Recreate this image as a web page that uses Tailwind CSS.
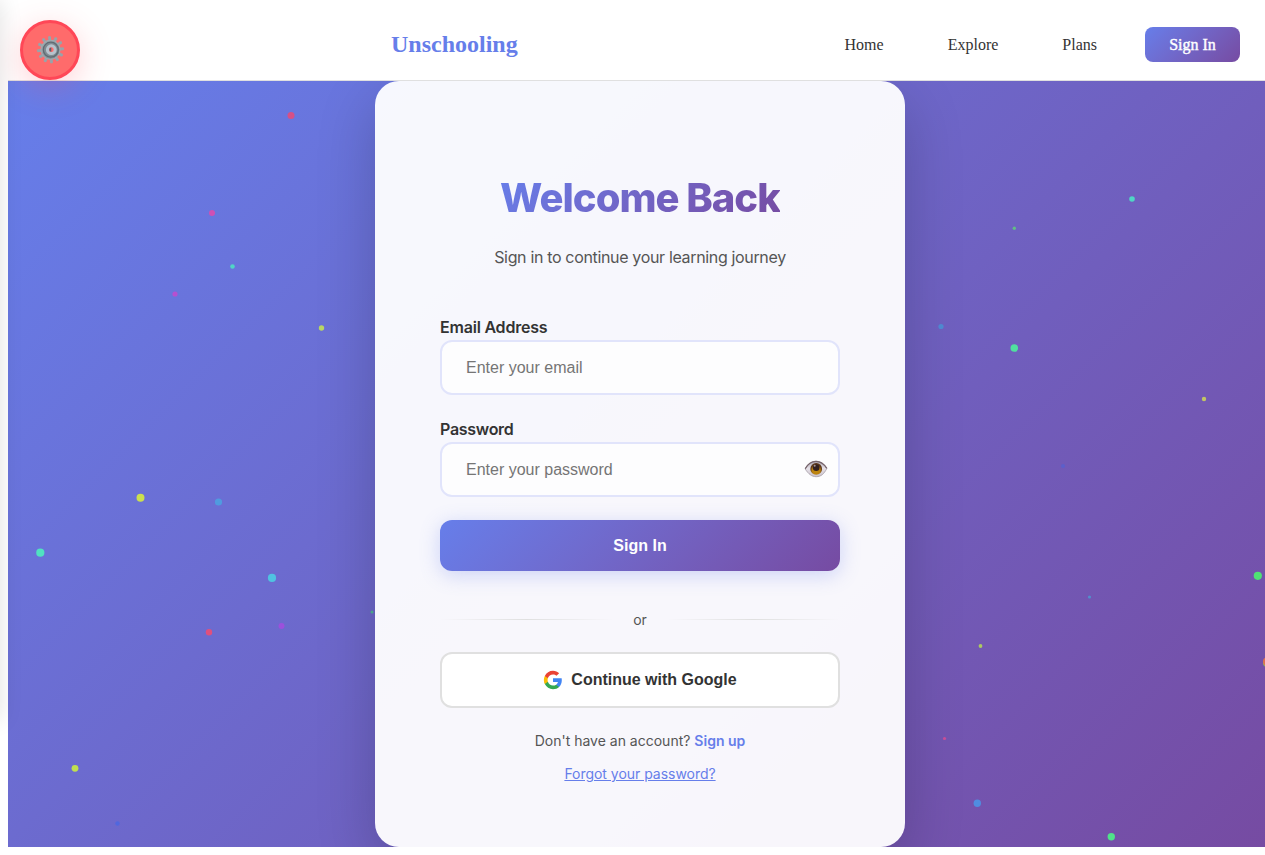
<!DOCTYPE html>
<html lang="en">
<head>
<meta charset="utf-8">
<title>Unschooling</title>
<script src="https://cdn.jsdelivr.net/npm/@tailwindcss/browser@4"></script>
</head>
<body class="h-[855px] overflow-hidden bg-white font-['Liberation_Serif',serif]">
<div class="relative h-[855px] w-[1280px] px-2">
  <header class="flex h-[81px] items-center border-b border-[#e0e0e0] pt-2 pr-8">
    <div class="ml-[383px] text-2xl font-bold text-[#667eea]">Unschooling</div>
    <nav class="ml-auto flex items-center text-base text-[#333]">
      <a class="mr-16 pt-0.5">Home</a>
      <a class="mr-16 pt-0.5">Explore</a>
      <a class="mr-12 pt-0.5">Plans</a>
      <a class="flex h-[35px] w-[95px] items-center justify-center rounded-lg bg-linear-135 from-[#667eea] to-[#764ba2] pt-px font-medium text-white [-webkit-text-stroke:0.4px_white]">Sign In</a>
    </nav>
  </header>

  <main class="relative flex h-[766px] justify-center overflow-hidden bg-[linear-gradient(135deg,#667eea_0%,#764ba2_100%)] font-['Inter',sans-serif]">
    <svg class="absolute inset-0" width="1264" height="766" viewBox="8 81 1264 766">
      <circle cx="291" cy="115.500" r="3.500" fill="#d65087"/>
      <circle cx="212" cy="213" r="3" fill="#cf50b5"/>
      <circle cx="232.500" cy="266.500" r="2.300" fill="#50d5c6"/>
      <circle cx="175" cy="294" r="2.600" fill="#b650d0"/>
      <circle cx="321.500" cy="328" r="2.700" fill="#b9d766"/>
      <circle cx="140.500" cy="497.700" r="4" fill="#cbe04e"/>
      <circle cx="218.500" cy="502" r="3.600" fill="#509bdf"/>
      <circle cx="40.300" cy="552.700" r="4.100" fill="#50e2c1"/>
      <circle cx="272" cy="577.900" r="4.100" fill="#50c2e1"/>
      <circle cx="209" cy="632.200" r="3.200" fill="#df507e"/>
      <circle cx="281.500" cy="626" r="3" fill="#9c50dc"/>
      <circle cx="372" cy="612" r="1.500" fill="#50b696"/>
      <circle cx="75" cy="768.300" r="3.400" fill="#c0e04f"/>
      <circle cx="117.500" cy="823.500" r="2.200" fill="#5067de"/>
      <circle cx="1132" cy="199" r="2.800" fill="#50d5c5"/>
      <circle cx="1014.300" cy="228.300" r="1.700" fill="#62bd86"/>
      <circle cx="941" cy="326.500" r="2.600" fill="#508bd4"/>
      <circle cx="1014.300" cy="348" r="3.800" fill="#50df9f"/>
      <circle cx="1204" cy="399" r="2.200" fill="#c2c664"/>
      <circle cx="1063" cy="466" r="2" fill="#5c5fcb"/>
      <circle cx="1089.500" cy="597" r="1.600" fill="#528fcb"/>
      <circle cx="1257.800" cy="575.800" r="4.100" fill="#50e174"/>
      <circle cx="980.500" cy="646" r="1.900" fill="#abc962"/>
      <circle cx="1267" cy="663" r="4" fill="#91be50"/>
      <circle cx="1267" cy="661.500" r="4" fill="#df7050"/>
      <circle cx="944.500" cy="738.500" r="1.600" fill="#cc509a"/>
      <circle cx="977.300" cy="803.300" r="3.700" fill="#508de0"/>
      <circle cx="1111.300" cy="836.800" r="3.700" fill="#50e18a"/>
    </svg>

    <section class="relative flex h-[766px] w-[530px] flex-col rounded-3xl bg-white/95 px-[65px] pt-[93px] text-center shadow-[0_20px_60px_rgba(0,0,0,0.2)]">
      <h1 class="mx-auto bg-linear-135 from-[#667eea] to-[#764ba2] bg-clip-text text-[40px] leading-12 font-extrabold tracking-[-1px] text-transparent">Welcome Back</h1>
      <p class="mt-[23px] text-base leading-6 tracking-[-0.34px] text-[#555]">Sign in to continue your learning journey</p>
      <label class="mt-[46px] text-left text-base leading-6 font-semibold tracking-[-0.21px] text-[#333]">Email Address</label>
      <div class="mt-px flex h-[55px] items-center rounded-xl border-2 border-[#e1e4fb] bg-[#fdfdfe] px-6 font-['Liberation_Sans',sans-serif] text-base text-[#757575]">Enter your email</div>
      <label class="mt-[22px] text-left text-base leading-6 font-semibold tracking-[-0.3px] text-[#333]">Password</label>
      <div class="mt-px flex h-[55px] items-center justify-between rounded-xl border-2 border-[#e1e4fb] bg-[#fdfdfe] pr-[10px] pl-6 font-['Liberation_Sans',sans-serif] text-base text-[#757575]">
        <span>Enter your password</span>
        <svg class="mb-0.5" width="24" height="20" viewBox="0 0 24 20">
          <defs>
            <linearGradient id="sclera" x2="0" y2="1"><stop stop-color="#aaa3ad"/><stop offset=".45" stop-color="#e6e1e8"/><stop offset="1" stop-color="#cbc3cc"/></linearGradient>
            <radialGradient id="iris" cy=".65"><stop stop-color="#c08a12"/><stop offset=".65" stop-color="#bc820d"/><stop offset="1" stop-color="#5a3518"/></radialGradient>
          </defs>
          <path d="M1.200 10C4 4.700 7.500 2.300 12 2.300S20 4.800 22.800 9.500C20 15 17 17.700 12.300 17.700S4.500 15 1.200 10Z" fill="url(#sclera)" stroke="#a69da7" stroke-width=".8"/>
          <circle cx="12.200" cy="9.900" r="5.900" fill="url(#iris)"/>
          <circle cx="12.200" cy="8.800" r="3.300" fill="#33201f"/>
          <circle cx="10.700" cy="6.700" r="1" fill="#a59595"/>
          <path d="M1.200 9.700C4 4.600 7.500 2.300 12 2.300S20 4.800 22.800 9.300" fill="none" stroke="#76646b" stroke-width="1.300"/>
        </svg>
      </div>
      <button class="mt-[23px] h-[51px] shrink-0 rounded-xl bg-linear-135 from-[#667eea] to-[#764ba2] font-['Liberation_Sans',sans-serif] text-base font-bold text-white shadow-[0_4px_20px_rgba(102,126,234,0.3)]">Sign In</button>
      <div class="mt-[38px] flex h-[22px] items-center">
        <div class="mb-px h-px flex-1 bg-[linear-gradient(90deg,transparent,#e0e0e0,transparent)]"></div>
        <span class="px-5 text-sm text-[#555]">or</span>
        <div class="mb-px h-px flex-1 bg-[linear-gradient(90deg,transparent,#e0e0e0,transparent)]"></div>
      </div>
      <button class="mt-[21px] flex h-14 shrink-0 items-center justify-center gap-2 rounded-xl border-2 border-[#e0e0e0] bg-white font-['Liberation_Sans',sans-serif] text-base font-bold text-[#333]">
        <svg width="20" height="20" viewBox="0 0 24 24">
          <path fill="#4285F4" d="M22.560 12.250c0-.78-.07-1.530-.2-2.250H12v4.260h5.920c-.26 1.370-1.040 2.530-2.210 3.310v2.770h3.570c2.080-1.920 3.280-4.740 3.280-8.090z"/>
          <path fill="#34A853" d="M12 23c2.970 0 5.460-.98 7.280-2.660l-3.570-2.770c-.98.66-2.230 1.060-3.710 1.060-2.860 0-5.290-1.930-6.160-4.530H2.180v2.840C3.990 20.530 7.700 23 12 23z"/>
          <path fill="#FBBC05" d="M5.840 14.090c-.22-.66-.35-1.360-.35-2.090s.13-1.430.35-2.090V7.070H2.180C1.430 8.550 1 10.220 1 12s.43 3.450 1.180 4.930l3.660-2.840z"/>
          <path fill="#EA4335" d="M12 5.380c1.620 0 3.060.56 4.210 1.640l3.150-3.150C17.450 2.090 14.970 1 12 1 7.700 1 3.990 3.470 2.180 7.070l3.660 2.840c.87-2.600 3.300-4.530 6.160-4.530z"/>
        </svg>
        <span>Continue with Google</span>
      </button>
      <p class="mt-[22px] text-sm leading-[22px] text-[#555]"><span>Don't have an account?</span> <a class="font-semibold text-[#667eea]">Sign up</a></p>
      <a class="mt-[11px] text-sm leading-[22px] tracking-[-0.03px] text-[#667eea] underline">Forgot your password?</a>
    </section>
  </main>

  <aside class="absolute top-0 -left-[300px] h-[720px] w-[300px] shadow-[2px_0_20px_rgba(0,0,0,0.1)]"></aside>
  <button class="absolute top-5 left-5 flex size-[60px] items-center justify-center rounded-full border-3 border-[#ff4757] bg-[#ff6b6b] shadow-[0_8px_32px_rgba(255,71,87,0.25)]">
    <svg width="30" height="30" viewBox="-15.500 -14.700 30 30">
      <defs>
        <linearGradient id="metal" x1="0" x2="1" y2="1"><stop stop-color="#a3abb0"/><stop offset="1" stop-color="#7d878c"/></linearGradient>
        <path id="tooth" d="M-1.500-8.500L-1.600-13Q0-14.500 1.400-13L1.300-8.500Z"/>
      </defs>
      <g fill="#99a3aa" transform="rotate(-4)">
        <use href="#tooth"/><use href="#tooth" transform="rotate(30)"/><use href="#tooth" transform="rotate(60)"/><use href="#tooth" transform="rotate(90)"/><use href="#tooth" transform="rotate(120)"/><use href="#tooth" transform="rotate(150)"/><use href="#tooth" transform="rotate(180)"/><use href="#tooth" transform="rotate(210)"/><use href="#tooth" transform="rotate(240)"/><use href="#tooth" transform="rotate(270)"/><use href="#tooth" transform="rotate(300)"/><use href="#tooth" transform="rotate(330)"/>
      </g>
      <circle r="9.600" fill="url(#metal)" stroke="#a2abb0" stroke-width="1"/>
      <circle cx=".3" r="7.500" fill="#7f8b91" stroke="#5f6c74" stroke-width="1.300"/>
      <circle cx=".8" r="3.900" fill="#ff6b6b" stroke="#b6c3cd" stroke-width="3"/>
      <path d="M.8-2.100A2.100 2.100 0 0 0 .8 2.100Z" fill="#59636a"/>
    </svg>
  </button>
</div>
</body>
</html>
